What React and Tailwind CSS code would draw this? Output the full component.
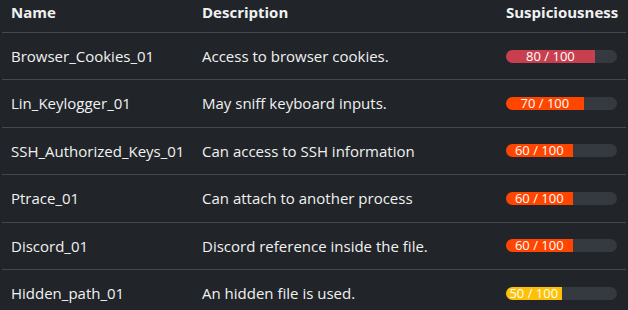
import React from "react";

const rows = [
  { name: "Browser_Cookies_01", desc: "Access to browser cookies.", score: 80, color: "bg-[#c8404f]" },
  { name: "Lin_Keylogger_01", desc: "May sniff keyboard inputs.", score: 70, color: "bg-[#ff4500]" },
  { name: "SSH_Authorized_Keys_01", desc: "Can access to SSH information", score: 60, color: "bg-[#ff4500]" },
  { name: "Ptrace_01", desc: "Can attach to another process", score: 60, color: "bg-[#ff4500]" },
  { name: "Discord_01", desc: "Discord reference inside the file.", score: 60, color: "bg-[#ff4500]" },
  { name: "Hidden_path_01", desc: "An hidden file is used.", score: 50, color: "bg-[#ffc107]" },
];

const ScoreBar = ({ score, color }) => (
  <div className="flex h-[13px] w-full rounded-full bg-[#343a40]">
    <div
      className={`flex items-center justify-center whitespace-nowrap rounded-l-full text-[13px] leading-[13px] text-white ${color}`}
      style={{ width: `${score}%` }}
    >
      {score} / 100
    </div>
  </div>
);

const App = () => {
  return (
    <div className="h-[310px] w-[628px] overflow-hidden bg-[#212529] pl-[2px] pr-[2px] font-['Open_Sans',sans-serif] text-[15px] text-[#f1f1f1]">
      <table className="w-full table-fixed border-collapse">
        <colgroup>
          <col className="w-[191px]" />
          <col className="w-[304px]" />
          <col className="w-[129px]" />
        </colgroup>
        <thead>
          <tr className="border-b border-[#45494e]">
            <th className="h-[32px] px-[9px] pb-[8px] text-left align-middle font-bold leading-6">Name</th>
            <th className="h-[32px] px-[9px] pb-[8px] text-left align-middle font-bold leading-6">Description</th>
            <th className="h-[32px] px-[9px] pb-[8px] text-left align-middle font-bold leading-6">Suspiciousness</th>
          </tr>
        </thead>
        <tbody>
          {rows.map((r) => (
            <tr key={r.name} className="border-b border-[#45494e]">
              <td className="h-[47.4px] px-[9px] align-middle">{r.name}</td>
              <td className="h-[47.4px] px-[9px] align-middle">{r.desc}</td>
              <td className="h-[47.4px] px-[9px] align-middle">
                <ScoreBar score={r.score} color={r.color} />
              </td>
            </tr>
          ))}
        </tbody>
      </table>
    </div>
  );
};

export default App;
